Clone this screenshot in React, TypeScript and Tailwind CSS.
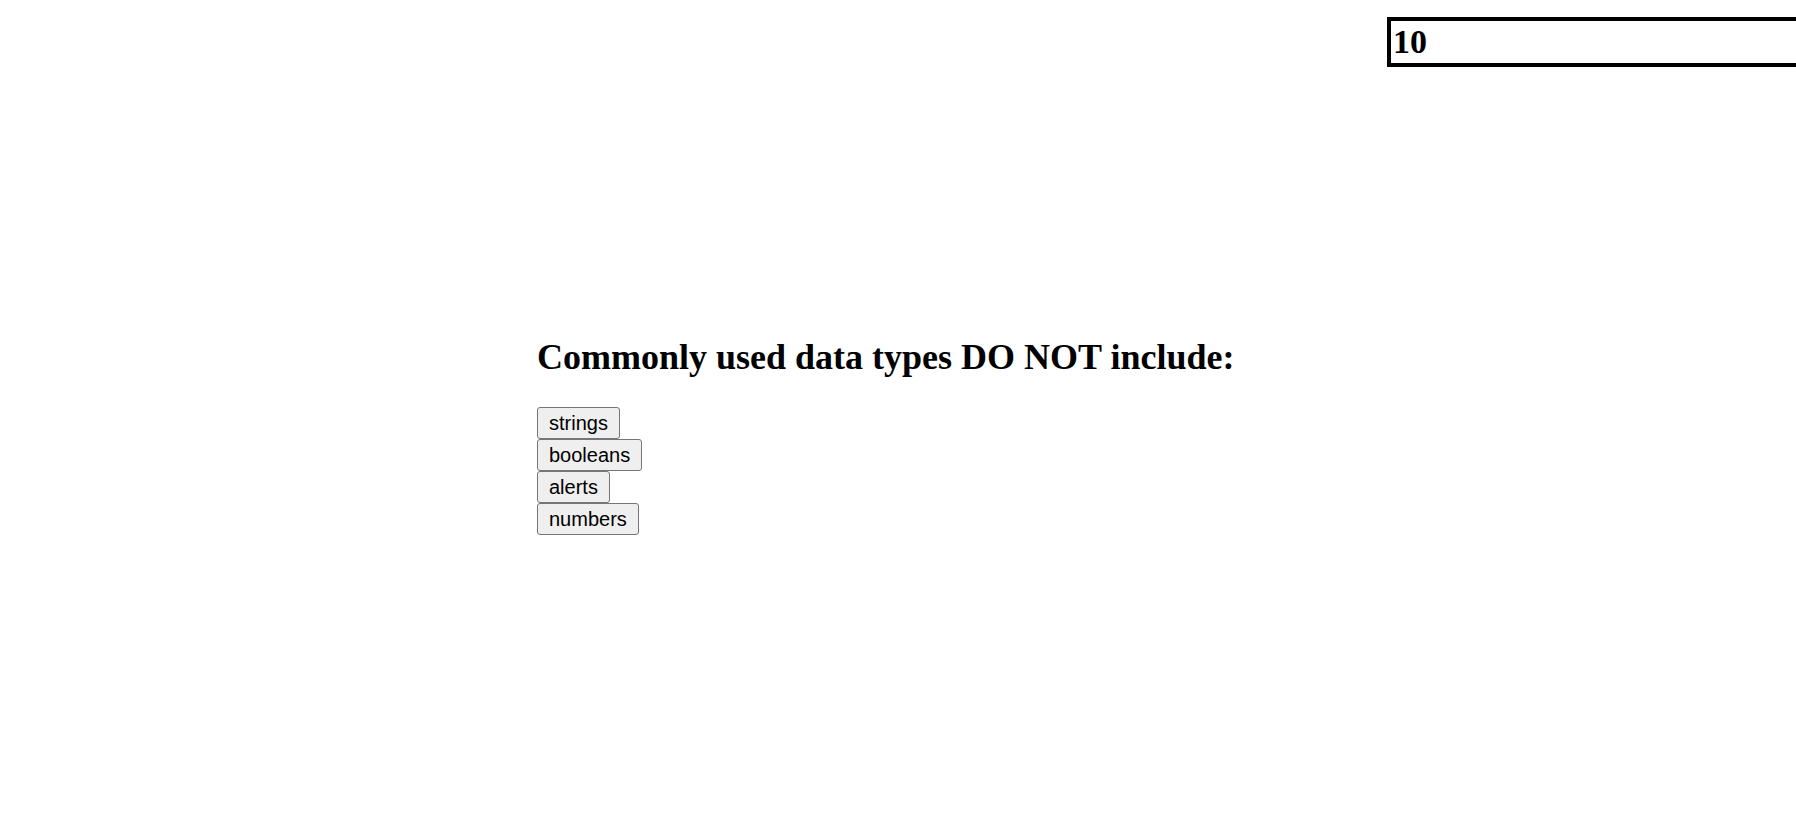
const choices = ['strings', 'booleans', 'alerts', 'numbers'];

export default function App() {
  return (
    <div className="min-h-[838px] w-full overflow-hidden bg-white font-['Liberation_Serif',serif] text-black">
      {/* timer, runs off the right edge */}
      <div className="flex justify-start pt-[17px] pl-[1387px]">
        <div className="h-[50px] w-[440px] shrink-0 border-4 border-black pl-[2px] pt-[2px]">
          <span className="text-[34px] font-bold leading-[38px]">10</span>
        </div>
      </div>
      <div className="ml-[537px] mt-[269px] flex flex-col items-start">
        <h2 className="text-[36px] font-bold leading-[42px]">Commonly used data types DO NOT include:</h2>
        <div className="mt-[29px] flex flex-col items-start">
          {choices.map((c) => (
            <button
              key={c}
              className="h-[32px] rounded-[3px] border border-[#767676] bg-[#efefef] px-[11px] font-['Liberation_Sans',sans-serif] text-[20px] leading-[23px] text-black"
            >
              {c}
            </button>
          ))}
        </div>
      </div>
    </div>
  );
}
